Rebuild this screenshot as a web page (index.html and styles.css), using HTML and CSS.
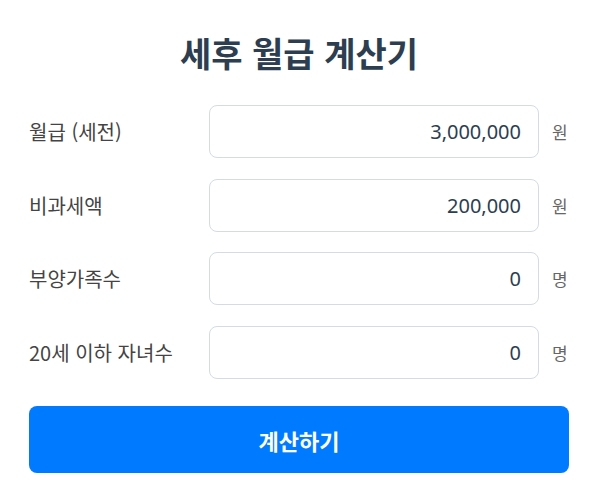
FILE: index.html
```html
<!DOCTYPE html>
<html lang="ko">
<head>
  <meta charset="UTF-8" />
  <title>세후 월급 계산기</title>
  <link rel="stylesheet" href="styles.css">
</head>
<body>
  <div class="calculator">
    <h1>세후 월급 계산기</h1>

    <div class="form-row">
      <label for="salary">월급 (세전)</label>
      <input type="text" id="salary" class="input-field" value="3,000,000" />
      <span class="unit">원</span>
    </div>

    <div class="form-row">
      <label for="nonTaxable">비과세액</label>
      <input type="text" id="nonTaxable" class="input-field" value="200,000" />
      <span class="unit">원</span>
    </div>

    <div class="form-row">
      <label for="dependents">부양가족수</label>
      <input type="text" id="dependents" class="input-field" value="0" />
      <span class="unit">명</span>
    </div>

    <div class="form-row">
      <label for="children">20세 이하 자녀수</label>
      <input type="text" id="children" class="input-field" value="0" />
      <span class="unit">명</span>
    </div>

    <button class="button">계산하기</button>
  </div>
</body>
</html>
```

FILE: styles.css
```css
body {
  font-family: "Noto Sans CJK KR", "Noto Sans", sans-serif;
  background-color: #ffffff;
  color: #2c3e50;
  margin: 0;
  padding: 0;
}

.calculator {
  width: 540px;
  padding: 20px 0 0 29px;
}

h1 {
  font-size: 34px;
  font-weight: 700;
  text-align: center;
  color: #2c3e50;
  margin: 0 0 19px 0;
  line-height: 66px;
}

.form-row {
  display: flex;
  align-items: center;
  gap: 13px;
  margin-bottom: 20.5px;
}

.form-row label {
  width: 180px;
  margin-right: -13px;
  font-size: 20px;
  color: #444;
}

.input-field {
  flex: 1;
  min-width: 0;
  height: 53px;
  box-sizing: border-box;
  border: 1px solid #d4dbe3;
  border-radius: 8px;
  padding: 0 17px;
  font-family: "Noto Sans", "Noto Sans CJK KR", sans-serif;
  font-size: 20px;
  color: #2c3e50;
  text-align: right;
}

.unit {
  width: 17px;
  font-size: 17px;
  color: #666;
}

.button {
  display: block;
  width: 100%;
  height: 67px;
  margin-top: 27.5px;
  background-color: #007bff;
  color: #ffffff;
  border: none;
  border-radius: 8px;
  font-family: inherit;
  font-size: 22px;
  font-weight: 700;
  cursor: pointer;
}
```
